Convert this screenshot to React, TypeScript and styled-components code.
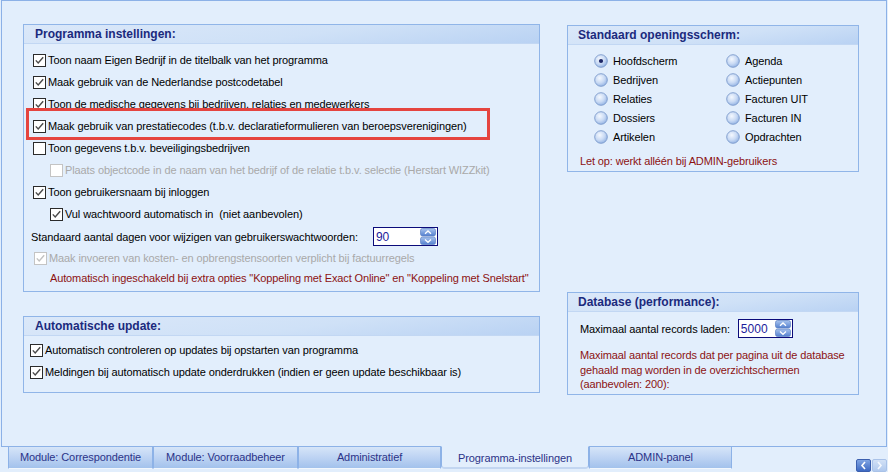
import React from "react";
import styled, { createGlobalStyle, css } from "styled-components";

const Global = createGlobalStyle`
  html, body { margin: 0; padding: 0; }
  body {
    background: #e2eefc;
    font-family: "Liberation Sans", Arial, sans-serif;
    font-size: 11px;
    letter-spacing: -0.1px;
    color: #000;
    width: 888px;
    height: 472px;
    overflow: hidden;
  }
`;

const Page = styled.div`
  width: 888px;
  height: 472px;
  padding-left: 1px;
  box-sizing: border-box;
`;

const Frame = styled.div`
  width: 886px;
  height: 447px;
  box-sizing: border-box;
  border: 1px solid #8cb1e7;
  display: flex;
  gap: 27px;
  padding: 23px 0 0 21px;
`;

const Column = styled.div<{ $width: number; $top?: number }>`
  width: ${(p) => p.$width}px;
  display: flex;
  flex-direction: column;
  gap: 24px;
  padding-top: ${(p) => p.$top ?? 0}px;
`;

const Panel = styled.section<{ $height: number; $offset?: number }>`
  position: relative;
  height: ${(p) => p.$height}px;
  box-sizing: border-box;
  border: 1px solid #90b5e8;
  margin-top: ${(p) => p.$offset ?? 0}px;
`;

const PanelHeader = styled.div<{ $pad: number }>`
  height: 18px;
  line-height: 18px;
  padding-left: ${(p) => p.$pad}px;
  font-size: 12px;
  font-weight: bold;
  letter-spacing: 0;
  color: #1b2a7d;
  background: linear-gradient(172deg, #dbe8f9 0%, #cfe1f7 55%, #b9d2f3 100%);
  border-bottom: 1px solid #c2d7f3;
`;

const PanelBody = styled.div<{ $top: number; $left?: number }>`
  padding-top: ${(p) => p.$top}px;
  padding-left: ${(p) => p.$left ?? 0}px;
`;

const Row = styled.div<{ $h?: number; $indent?: number }>`
  position: relative;
  display: flex;
  align-items: center;
  height: ${(p) => p.$h ?? 22}px;
  padding-left: ${(p) => p.$indent ?? 0}px;
  white-space: nowrap;
`;

const Label = styled.span<{ $muted?: boolean; $gap?: number }>`
  margin-left: ${(p) => p.$gap ?? 2}px;
  color: ${(p) => (p.$muted ? "#a9a9a9" : "#000")};
`;

const Note = styled.div<{ $indent?: number; $lh?: number; $top?: number }>`
  color: #8c1212;
  padding-left: ${(p) => p.$indent ?? 0}px;
  margin-top: ${(p) => p.$top ?? 0}px;
  line-height: ${(p) => p.$lh ?? 14}px;
  letter-spacing: -0.13px;
  white-space: nowrap;
`;

const Highlight = styled.div`
  position: absolute;
  left: 2px;
  top: -7px;
  width: 464px;
  height: 32px;
  box-sizing: border-box;
  border: 3px solid #e5443f;
  pointer-events: none;
`;

const NumberBox = styled.div<{ $width: number; $left: number }>`
  margin-left: ${(p) => p.$left}px;
  width: ${(p) => p.$width}px;
  height: 19px;
  box-sizing: border-box;
  border: 1px solid #0b0b7a;
  background: #fff;
  display: flex;
  align-items: center;
  justify-content: space-between;
  padding: 0 1px 0 2px;
  color: #1d1d9c;
  font-size: 12px;
  letter-spacing: 0;
`;

const RadioGrid = styled.div`
  display: grid;
  grid-template-columns: 132px 120px;
  grid-auto-rows: 19px;
  padding-left: 26px;
`;

const RadioItem = styled.div`
  display: flex;
  align-items: center;
  gap: 5px;
  white-space: nowrap;
`;

const TabStrip = styled.div`
  display: flex;
  align-items: flex-start;
  margin-top: -1px;
  padding-left: 7px;
  height: 26px;
`;

const Tab = styled.div<{ $w: number; $active?: boolean }>`
  width: ${(p) => p.$w}px;
  height: 23px;
  box-sizing: border-box;
  display: flex;
  align-items: center;
  justify-content: center;
  color: #2b3388;
  font-size: 11px;
  border: 1px solid #8db2e7;
  ${(p) =>
    p.$active
      ? css`
          background: #e2eefc;
          border-top-color: #e2eefc;
          border-bottom: 2px solid #c3d6f1;
          border-radius: 0 0 4px 4px;
          padding-top: 2px;
        `
      : css`
          background: linear-gradient(180deg, #d6e5f8 0%, #bdd3f3 50%, #a3c2ec 100%);
          border-bottom-color: #f2f7fd;
          padding-bottom: 1px;
        `}
`;

const ScrollButtons = styled.div`
  display: flex;
  gap: 1px;
  margin-left: auto;
  margin-top: 13px;
  margin-right: 1px;
`;

const ScrollButton = styled.div<{ $on?: boolean }>`
  width: 15px;
  height: 13px;
  border-radius: 2px;
  display: flex;
  align-items: center;
  justify-content: center;
  background: ${(p) =>
    p.$on
      ? "linear-gradient(180deg, #7fa4e3 0%, #3d69c2 100%)"
      : "linear-gradient(180deg, #d2e1f6 0%, #b0c9ee 100%)"};
  border: 1px solid ${(p) => (p.$on ? "#3b5fae" : "#a9c2e8")};
  box-sizing: border-box;
`;

const CheckBox = ({ checked, disabled }: { checked?: boolean; disabled?: boolean }) => {
  const border = disabled ? "#c4c4c4" : "#2b2b2b";
  const mark = disabled ? "#c2c2c2" : "#4a4a4a";
  return (
    <svg width="13" height="13" viewBox="0 0 13 13" style={{ flex: "none" }}>
      <rect x="0.5" y="0.5" width="12" height="12" fill="#fff" stroke={border} />
      {checked && (
        <polyline
          points="2.8,6.4 5.2,9 10.2,3.2"
          fill="none"
          stroke={mark}
          strokeWidth="1.4"
        />
      )}
    </svg>
  );
};

const Radio = ({ checked }: { checked?: boolean }) => (
  <svg width="14" height="14" viewBox="0 0 14 14" style={{ flex: "none" }}>
    <defs>
      <radialGradient id="rg" cx="0.4" cy="0.35" r="0.7">
        <stop offset="0" stopColor="#f4f8fe" />
        <stop offset="0.55" stopColor="#c9daf4" />
        <stop offset="1" stopColor="#8fb0e2" />
      </radialGradient>
    </defs>
    <circle cx="7" cy="7" r="6.3" fill="url(#rg)" stroke="#7d9bcc" strokeWidth="0.9" />
    {checked && <circle cx="7" cy="7" r="2.1" fill="#1c2565" />}
  </svg>
);

const Spinner = () => (
  <svg width="16" height="17" viewBox="0 0 16 17" style={{ flex: "none" }}>
    <defs>
      <linearGradient id="sg" x1="0" y1="0" x2="0" y2="1">
        <stop offset="0" stopColor="#a9c4ee" />
        <stop offset="1" stopColor="#5480cf" />
      </linearGradient>
    </defs>
    <rect x="0.5" y="0.5" width="15" height="7.5" rx="2" fill="url(#sg)" stroke="#5f82c4" strokeWidth="0.7" />
    <rect x="0.5" y="9" width="15" height="7.5" rx="2" fill="url(#sg)" stroke="#5f82c4" strokeWidth="0.7" />
    <polyline points="5,5.8 8,3 11,5.8" fill="none" stroke="#fff" strokeWidth="1.3" />
    <polyline points="5,11.5 8,14.3 11,11.5" fill="none" stroke="#fff" strokeWidth="1.3" />
  </svg>
);

const Chevron = ({ dir, color }: { dir: "left" | "right"; color: string }) => (
  <svg width="7" height="9" viewBox="0 0 7 9">
    <polyline
      points={dir === "left" ? "5,1 2,4.5 5,8" : "2,1 5,4.5 2,8"}
      fill="none"
      stroke={color}
      strokeWidth="1.6"
    />
  </svg>
);

const radios: [string, boolean][][] = [
  [["Hoofdscherm", true], ["Agenda", false]],
  [["Bedrijven", false], ["Actiepunten", false]],
  [["Relaties", false], ["Facturen UIT", false]],
  [["Dossiers", false], ["Facturen IN", false]],
  [["Artikelen", false], ["Opdrachten", false]],
];

const tabs = [
  { label: "Module: Correspondentie", w: 145 },
  { label: "Module: Voorraadbeheer", w: 145 },
  { label: "Administratief", w: 143 },
  { label: "Programma-instellingen", w: 148, active: true },
  { label: "ADMIN-panel", w: 143 },
];

export default function App() {
  return (
    <Page>
      <Global />
      <Frame>
        <Column $width={517}>
          <Panel $height={268}>
            <PanelHeader $pad={11}>Programma instellingen:</PanelHeader>
            <PanelBody $top={5}>
              <Row $indent={9}>
                <CheckBox checked />
                <Label>Toon naam Eigen Bedrijf in de titelbalk van het programma</Label>
              </Row>
              <Row $indent={9}>
                <CheckBox checked />
                <Label>Maak gebruik van de Nederlandse postcodetabel</Label>
              </Row>
              <Row $indent={9}>
                <CheckBox checked />
                <Label>Toon de medische gegevens bij bedrijven, relaties en medewerkers</Label>
              </Row>
              <Row $indent={9}>
                <CheckBox checked />
                <Label>
                  Maak gebruik van prestatiecodes (t.b.v. declaratieformulieren van beroepsverenigingen)
                </Label>
                <Highlight />
              </Row>
              <Row $indent={9}>
                <CheckBox />
                <Label>Toon gegevens t.b.v. beveiligingsbedrijven</Label>
              </Row>
              <Row $indent={26}>
                <CheckBox disabled />
                <Label $muted>
                  Plaats objectcode in de naam van het bedrijf of de relatie t.b.v. selectie (Herstart WIZZkit)
                </Label>
              </Row>
              <Row $indent={9}>
                <CheckBox checked />
                <Label>Toon gebruikersnaam bij inloggen</Label>
              </Row>
              <Row $indent={26}>
                <CheckBox checked />
                <Label>Vul wachtwoord automatisch in&nbsp; (niet aanbevolen)</Label>
              </Row>
              <Row $h={23} $indent={7}>
                <span>Standaard aantal dagen voor wijzigen van gebruikerswachtwoorden:</span>
                <NumberBox $width={65} $left={15}>
                  <span>90</span>
                  <Spinner />
                </NumberBox>
              </Row>
              <Row $h={20} $indent={10}>
                <CheckBox checked disabled />
                <Label $muted>
                  Maak invoeren van kosten- en opbrengstensoorten verplicht bij factuurregels
                </Label>
              </Row>
              <Row $h={19}>
                <Note $indent={26}>
                  Automatisch ingeschakeld bij extra opties "Koppeling met Exact Online" en "Koppeling met Snelstart"
                </Note>
              </Row>
            </PanelBody>
          </Panel>
          <Panel $height={77}>
            <PanelHeader $pad={11}>Automatische update:</PanelHeader>
            <PanelBody $top={3}>
              <Row $indent={6}>
                <CheckBox checked />
                <Label>Automatisch controleren op updates bij opstarten van programma</Label>
              </Row>
              <Row $indent={6}>
                <CheckBox checked />
                <Label>Meldingen bij automatisch update onderdrukken (indien er geen update beschikbaar is)</Label>
              </Row>
            </PanelBody>
          </Panel>
        </Column>
        <Column $width={292} $top={1}>
          <Panel $height={147}>
            <PanelHeader $pad={10}>Standaard openingsscherm:</PanelHeader>
            <PanelBody $top={6}>
              <RadioGrid>
                {radios.flat().map(([label, on]) => (
                  <RadioItem key={label}>
                    <Radio checked={on} />
                    <span>{label}</span>
                  </RadioItem>
                ))}
              </RadioGrid>
              <Note $indent={12} $top={8}>
                Let op: werkt alléén bij ADMIN-gebruikers
              </Note>
            </PanelBody>
          </Panel>
          <Panel $height={103} $offset={96}>
            <PanelHeader $pad={10}>Database (performance):</PanelHeader>
            <PanelBody $top={7} $left={12}>
              <Row $h={19}>
                <span>Maximaal aantal records laden:</span>
                <NumberBox $width={55} $left={8}>
                  <span>5000</span>
                  <Spinner />
                </NumberBox>
              </Row>
              <Note $lh={14.5} $top={10}>
                Maximaal aantal records dat per pagina uit de database
                <br />
                gehaald mag worden in de overzichtschermen
                <br />
                (aanbevolen: 200):
              </Note>
            </PanelBody>
          </Panel>
        </Column>
      </Frame>
      <TabStrip>
        {tabs.map((t) => (
          <Tab key={t.label} $w={t.w} $active={t.active}>
            {t.label}
          </Tab>
        ))}
        <ScrollButtons>
          <ScrollButton $on>
            <Chevron dir="left" color="#ffffff" />
          </ScrollButton>
          <ScrollButton>
            <Chevron dir="right" color="#f4f8fe" />
          </ScrollButton>
        </ScrollButtons>
      </TabStrip>
    </Page>
  );
}
